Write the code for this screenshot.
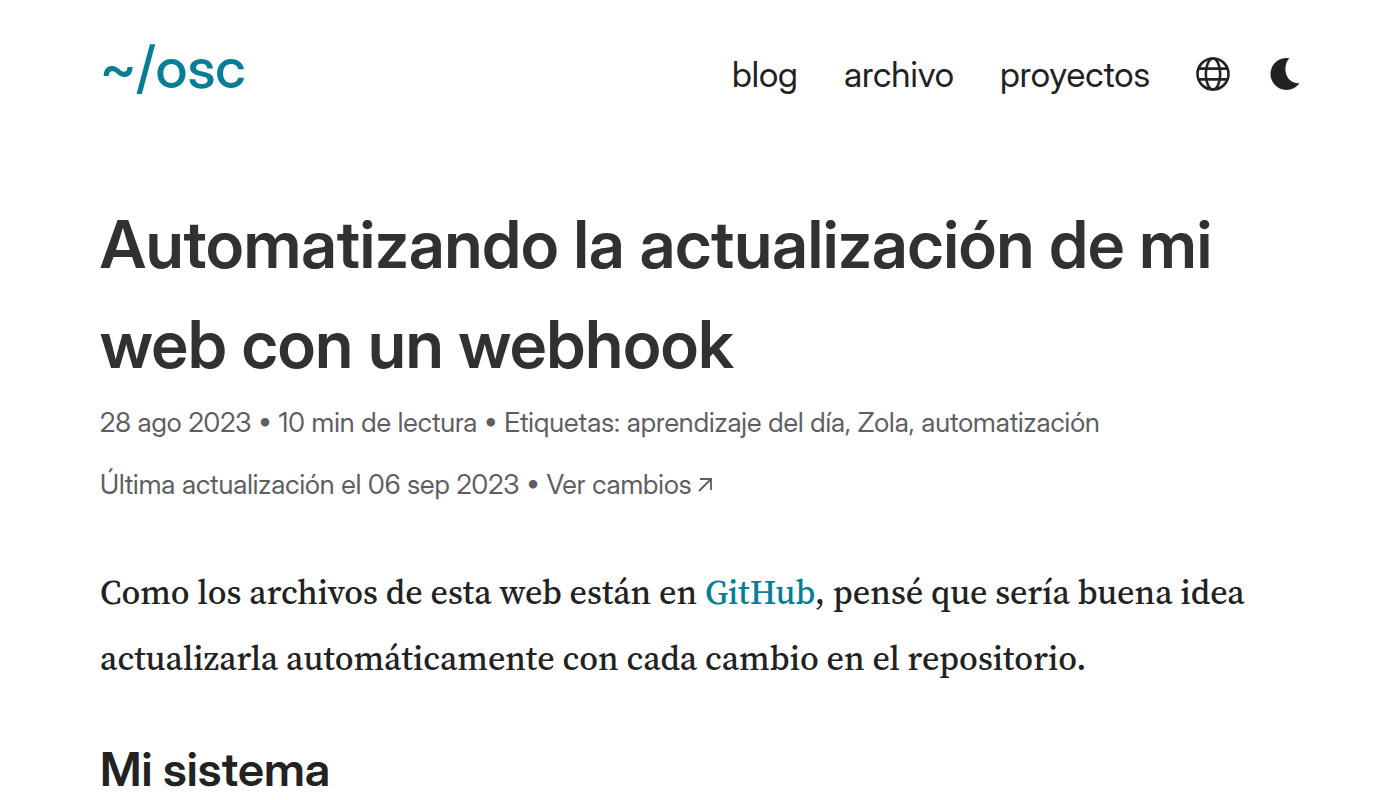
<svelte:head>
  <title>Automatizando la actualización de mi web con un webhook</title>
</svelte:head>

<div class="page">
  <header>
    <a class="logo" href="#inicio">~/osc</a>
    <nav aria-label="Principal">
      <a href="#blog">blog</a>
      <a href="#archivo">archivo</a>
      <a href="#proyectos">proyectos</a>
      <button type="button" aria-label="Cambiar idioma">
        <svg viewBox="0 0 34 34" width="34" height="34" fill="none" stroke="currentColor" stroke-width="2.6">
          <circle cx="17" cy="17" r="15.5" />
          <ellipse cx="17" cy="17" rx="7.2" ry="15.5" />
          <path d="M2.500 11.600h29M2.500 22.400h29" />
        </svg>
      </button>
      <button class="moon" type="button" aria-label="Cambiar tema">
        <svg viewBox="0 0 30 34" width="30" height="34" fill="currentColor">
          <path d="M19.500 1.200C12.500 7.500 13.500 26.500 29.500 26.200A16 16 0 1 1 19.500 1.200Z" />
        </svg>
      </button>
    </nav>
  </header>

  <main>
    <h1>Automatizando la actualización de mi web con un webhook</h1>
    <ul class="meta">
      <li>28 ago 2023 • 10 min de lectura • Etiquetas: <a href="#aprendizaje">aprendizaje del día</a>, <a href="#zola">Zola</a>, <a href="#automatizacion">automatización</a></li>
      <li>Última actualización el 06 sep 2023 • <a href="#cambios">Ver cambios
        <svg viewBox="0 0 14 14" width="14" height="14" fill="none" stroke="currentColor" stroke-width="1.8" aria-hidden="true"><path d="M1 13L13 1M2 1h11v11" /></svg></a></li>
    </ul>
    <p>Como los archivos de esta web están en <a href="#github">GitHub</a>, pensé que sería buena idea actualizarla automáticamente con cada cambio en el repositorio.</p>
    <h2>Mi sistema</h2>
  </main>
</div>

<style>
  :global(body) {
    margin: 0;
    background: #fff;
    color: #222;
    font-family: "Inter Display", Inter, "Liberation Sans", sans-serif;
  }
  .page { padding: 32px 100px 0; overflow: hidden; }
  header { display: flex; align-items: center; justify-content: space-between; height: 84px; }
  a { color: inherit; text-decoration: none; }
  .logo { margin-bottom: 12px; color: #087e96; font-size: 57px; font-weight: 500; line-height: 72px; }
  nav { display: flex; align-items: center; gap: 46px; font-size: 35px; line-height: 40px; font-weight: 400; }
  button { display: flex; padding: 0; border: 0; background: none; color: inherit; cursor: pointer; }
  .moon { margin-left: -6px; }
  h1 { margin: 78px 0 0; color: #313131; font-size: 66px; line-height: 100px; font-weight: 600; }
  .meta { margin: -2px 0 0; padding: 0; list-style: none; color: #5e5e62; font-size: 27px; line-height: 62px; font-weight: 400; }
  svg[aria-hidden] { vertical-align: 2px; }
  p { margin: 43px 0 0; font-family: "Source Serif 4", "Source Serif Pro", "Liberation Serif", serif; font-size: 34px; line-height: 66px; font-weight: 500; }
  p a { color: #087e96; }
  h2 { margin: 48px 0 0; font-size: 47px; line-height: 60px; font-weight: 600; }
</style>
